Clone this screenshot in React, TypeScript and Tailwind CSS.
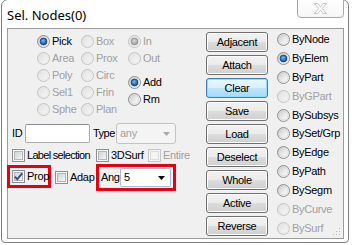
import React from "react";

type RProps = { checked?: boolean; disabled?: boolean };

function Radio({ checked, disabled }: RProps) {
  return (
    <svg width="13" height="13" viewBox="0 0 13 13" className="shrink-0 block">
      <circle cx="6.5" cy="6.5" r="6" fill={disabled ? "url(#rdis)" : "url(#ren)"} stroke={disabled ? "#c2c2c2" : "#8f8f8f"} strokeWidth="1" />
      <circle cx="6.5" cy="6.5" r="4.5" fill="none" stroke={disabled ? "#e6e6e6" : "#d6d6d6"} strokeWidth="0.8" />
      {checked && !disabled && (
        <circle cx="6.5" cy="6.5" r="3.4" fill="url(#rdot)" stroke="#163f74" strokeWidth="0.8" />
      )}
      {checked && disabled && (
        <circle cx="6.5" cy="6.5" r="3.4" fill="url(#rdotd)" stroke="#8d8d8d" strokeWidth="0.8" />
      )}
    </svg>
  );
}

function Check({ checked, disabled }: RProps) {
  return (
    <svg width="13" height="13" viewBox="0 0 13 13" className="shrink-0 block">
      <rect x="0.5" y="0.5" width="12" height="12" fill={disabled ? "#f4f4f4" : "#f6f6f6"} stroke={disabled ? "#c6c6c6" : "#8f8f8f"} />
      <rect x="2.5" y="2.5" width="8" height="8" fill={disabled ? "#f4f4f4" : "url(#cin)"} stroke={disabled ? "#dcdcdc" : "#b3b7bd"} />
      {checked && (
        <path d="M2.8 6.6 L5.2 9.2 L10.2 3.3" fill="none" stroke="#3b4f8c" strokeWidth="1.9" strokeLinejoin="miter" />
      )}
    </svg>
  );
}

function RadioItem({ label, checked, disabled, h = "h-[17px]" }: RProps & { label: string; h?: string }) {
  return (
    <div className={`flex items-center gap-[1px] ${h}`}>
      <Radio checked={checked} disabled={disabled} />
      <span className={`ml-[1px] leading-[13px] whitespace-nowrap ${disabled ? "text-[#a0a0a0]" : "text-black"}`}>{label}</span>
    </div>
  );
}

function Btn({ label, active }: { label: string; active?: boolean }) {
  return (
    <div
      className={
        active
          ? "h-[20px] w-[62px] rounded-[3px] border border-[#3c7fb1] bg-[linear-gradient(#eaf6fd_0%,#d9f0fc_50%,#bee6fd_50%,#a7d9f5_100%)] shadow-[inset_0_0_0_1px_#8fdcfb] flex items-center justify-center text-black leading-[13px]"
          : "h-[20px] w-[62px] rounded-[3px] border border-[#707070] bg-[linear-gradient(#f2f2f2_0%,#ebebeb_50%,#dddddd_50%,#cfcfcf_100%)] shadow-[inset_0_0_0_1px_#fcfcfc] flex items-center justify-center text-black leading-[13px]"
      }
    >
      {label}
    </div>
  );
}

export default function App() {
  const col1 = [
    { l: "Pick", c: true, d: false },
    { l: "Area", d: true },
    { l: "Poly", d: true },
    { l: "Sel1", d: true },
    { l: "Sphe", d: true },
  ];
  const col2 = ["Box", "Prox", "Circ", "Frin", "Plan"];
  const right: { l: string; c?: boolean; d?: boolean }[] = [
    { l: "ByNode" },
    { l: "ByElem", c: true },
    { l: "ByPart" },
    { l: "ByGPart", d: true },
    { l: "BySubsys" },
    { l: "BySet/Grp" },
    { l: "ByEdge" },
    { l: "ByPath" },
    { l: "BySegm" },
    { l: "ByCurve", d: true },
    { l: "BySurf", d: true },
  ];
  const buttons = ["Adjacent", "Attach", "Clear", "Save", "Load", "Deselect", "Whole", "Active", "Reverse"];

  return (
    <div className="w-[352px] h-[245px] bg-white overflow-hidden font-['Liberation_Sans',Arial,sans-serif] text-[11px] tracking-[-0.3px] text-black">
      <svg className="absolute w-0 h-0" aria-hidden="true">
        <defs>
          <linearGradient id="ren" x1="0" y1="0" x2="1" y2="1">
            <stop offset="0" stopColor="#c4c4c4" />
            <stop offset="0.55" stopColor="#ececec" />
            <stop offset="1" stopColor="#ffffff" />
          </linearGradient>
          <linearGradient id="rdis" x1="0" y1="0" x2="1" y2="1">
            <stop offset="0" stopColor="#dedede" />
            <stop offset="1" stopColor="#fafafa" />
          </linearGradient>
          <radialGradient id="rdot" cx="0.45" cy="0.4" r="0.6">
            <stop offset="0" stopColor="#7cc8f7" />
            <stop offset="0.5" stopColor="#2b7fd0" />
            <stop offset="1" stopColor="#0d4b95" />
          </radialGradient>
          <radialGradient id="rdotd" cx="0.45" cy="0.4" r="0.6">
            <stop offset="0" stopColor="#d8d8d8" />
            <stop offset="1" stopColor="#9a9a9a" />
          </radialGradient>
          <linearGradient id="cin" x1="0" y1="0" x2="1" y2="1">
            <stop offset="0" stopColor="#cfd2d6" />
            <stop offset="1" stopColor="#f7f7f7" />
          </linearGradient>
        </defs>
      </svg>

      <div className="ml-[1px] mt-[-1px] w-[348px] h-[244px] border border-[#7f7f7f] rounded-t-[7px] rounded-b-[4px] flex flex-col bg-white">
        {/* title bar */}
        <div className="h-[28px] flex justify-between items-start shrink-0">
          <span className="ml-[5px] mt-[7px] text-[13px] leading-[16px] tracking-normal font-['Noto_Sans',sans-serif] text-black">Sel. Nodes(0)</span>
          <div className="mt-[-1px] mr-[4px] w-[47px] h-[19px] border border-[#a9a9a9] rounded-b-[4px] bg-[linear-gradient(#ffffff,#f6f6f6)] flex items-center justify-center">
            <svg width="13" height="11" viewBox="0 0 13 11">
              <polygon points="0.5,0.5 3.8,0.5 6.5,3.6 9.2,0.5 12.5,0.5 8.4,5.5 12.5,10.5 9.2,10.5 6.5,7.4 3.8,10.5 0.5,10.5 4.6,5.5" fill="#fbfbfb" stroke="#c4c4c4" strokeWidth="1" />
            </svg>
          </div>
        </div>

        {/* client area */}
        <div className="ml-[5px] w-[337px] h-[211px] border border-[#9c9c9c] bg-[#f0f0f0] flex relative shrink-0">
          {/* left section */}
          <div className="w-[198px] flex flex-col shrink-0">
            <div className="mt-[4px] flex">
              <div className="ml-[29px] w-[44px] flex flex-col">
                {col1.map((r) => (
                  <RadioItem key={r.l} label={r.l} checked={r.c} disabled={r.d} />
                ))}
              </div>
              <div className="w-[47px] flex flex-col">
                {col2.map((l) => (
                  <RadioItem key={l} label={l} disabled />
                ))}
              </div>
              <div className="flex flex-col">
                <RadioItem label="In" checked disabled />
                <RadioItem label="Out" disabled />
                <div className="h-[7px]" />
                <RadioItem label="Add" checked />
                <RadioItem label="Rm" />
              </div>
            </div>

            {/* ID row */}
            <div className="mt-[5px] h-[21px] flex items-center">
              <span className="ml-[4px] w-[13px] leading-[13px]">ID</span>
              <div className="w-[65px] h-[19px] bg-white border border-[#abadb3] border-t-[#8a8c92] rounded-[2px]" />
              <span className="ml-[3px] w-[23px] leading-[13px] tracking-[-0.5px]">Type</span>
              <div className="w-[60px] h-[21px] border border-[#c3c3c3] rounded-[3px] bg-[#f4f4f4] flex items-center justify-between">
                <span className="ml-[3px] text-[#a3a3a3] leading-[13px]">any</span>
                <svg width="7" height="4" viewBox="0 0 7 4" className="mr-[5px]">
                  <polygon points="0,0 7,0 3.5,4" fill="#a9a9a9" />
                </svg>
              </div>
            </div>

            {/* checkbox row */}
            <div className="mt-[5px] h-[13px] flex items-center">
              <div className="ml-[4px] w-[84px] flex items-center">
                <Check />
                <span className="ml-[2px] leading-[13px] whitespace-nowrap tracking-[-0.7px]">Label selection</span>
              </div>
              <div className="w-[52px] flex items-center">
                <Check />
                <span className="ml-[2px] leading-[13px]">3DSurf</span>
              </div>
              <div className="flex items-center">
                <Check disabled />
                <span className="ml-[2px] leading-[13px] text-[#a0a0a0]">Entire</span>
              </div>
            </div>

            {/* bottom row */}
            <div className="mt-[2px] flex items-start">
              <div className="ml-[-1px] mt-[1px] w-[44px] h-[23px] border-[3px] border-[#e60012] flex items-center">
                <div className="ml-[2px]">
                  <Check checked />
                </div>
                <span className="ml-[2px] leading-[13px]">Prop</span>
              </div>
              <div className="ml-[4px] mt-[7px] w-[41px] flex items-center">
                <Check />
                <span className="ml-[2px] leading-[13px]">Adap</span>
              </div>
              <div className="w-[80px] h-[27px] border-[3px] border-[#e60012] flex items-center">
                <span className="ml-[2px] w-[19px] leading-[13px]">Ang</span>
                <div className="w-[51px] h-[19px] bg-white border border-[#a4bfdc] rounded-[2px] flex items-center justify-between">
                  <span className="ml-[3px] leading-[13px]">5</span>
                  <svg width="7" height="4" viewBox="0 0 7 4" className="mr-[5px]">
                    <polygon points="0,0 7,0 3.5,4" fill="#000" />
                  </svg>
                </div>
              </div>
            </div>
          </div>

          {/* buttons */}
          <div className="w-[62px] mt-[3px] flex flex-col gap-[3px] shrink-0">
            {buttons.map((b) => (
              <Btn key={b} label={b} active={b === "Clear"} />
            ))}
          </div>

          {/* right radios */}
          <div className="ml-[9px] mt-[1px] flex flex-col">
            {right.map((r) => (
              <RadioItem key={r.l} label={r.l} checked={r.c} disabled={r.d} h="h-[19px]" />
            ))}
          </div>

          {/* resize grip */}
          <svg width="9" height="9" viewBox="0 0 9 9" className="absolute right-[2px] bottom-[2px]">
            <rect x="7" y="1" width="1" height="1" fill="#b8b8b8" />
            <rect x="4" y="4" width="1" height="1" fill="#b8b8b8" />
            <rect x="7" y="4" width="1" height="1" fill="#b8b8b8" />
            <rect x="1" y="7" width="1" height="1" fill="#b8b8b8" />
            <rect x="4" y="7" width="1" height="1" fill="#b8b8b8" />
            <rect x="7" y="7" width="1" height="1" fill="#b8b8b8" />
          </svg>
        </div>
      </div>
    </div>
  );
}
